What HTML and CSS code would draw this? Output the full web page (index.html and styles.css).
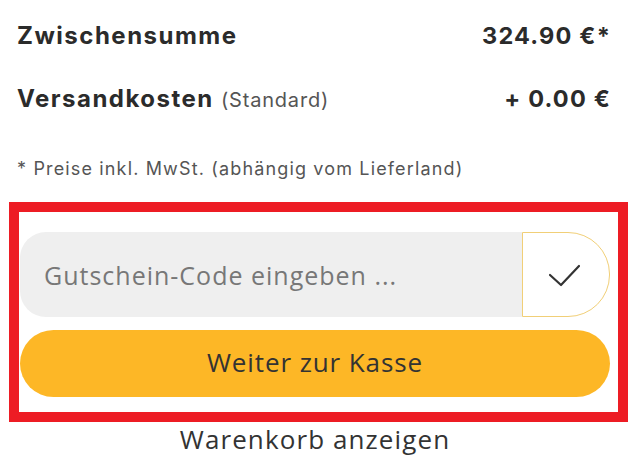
FILE: index.html
```html
<!DOCTYPE html>
<html lang="de">
<head>
<meta charset="utf-8">
<title>Warenkorb</title>
<link rel="stylesheet" href="styles.css">
</head>
<body>
<div class="page">
  <div class="totals">
    <div class="row">
      <span class="label">Zwischensumme</span>
      <span class="value">324.90 €*</span>
    </div>
    <div class="row">
      <span class="label">Versandkosten <span class="sub">(Standard)</span></span>
      <span class="value">+ 0.00 €</span>
    </div>
    <p class="note">* Preise inkl. MwSt. (abhängig vom Lieferland)</p>
  </div>
  <div class="highlight">
    <form class="voucher">
      <input class="voucher-input" type="text" placeholder="Gutschein-Code eingeben ...">
      <button class="voucher-submit" type="button" aria-label="Einlösen">
        <svg width="34" height="24" viewBox="0 0 34 24"><path d="M3 12 L14 22 L32 3" fill="none" stroke="#333" stroke-width="2.2" stroke-linecap="round" stroke-linejoin="round"/></svg>
      </button>
    </form>
    <button class="checkout" type="button">Weiter zur Kasse</button>
  </div>
  <a class="cart-link" href="#">Warenkorb anzeigen</a>
</div>
</body>
</html>
```
FILE: styles.css
```css
* { box-sizing: border-box; }
html, body { margin: 0; padding: 0; background: #fff; }
body { width: 630px; height: 473px; overflow: hidden; color: #333; font-family: "Inter", "DejaVu Sans", sans-serif; }
.page { display: flex; flex-direction: column; }
.totals { padding: 4px 20px 0 17px; }
.row { display: flex; justify-content: space-between; align-items: center; height: 63px; }
.label { font-size: 24px; font-weight: 700; color: #2b2b2b; letter-spacing: 1.5px; }
.sub { font-size: 20px; font-weight: 400; color: #555; letter-spacing: 0.8px; margin-left: 0; }
.value { font-size: 23.5px; font-weight: 700; color: #2b2b2b; letter-spacing: 1.2px; margin-right: -1px; }
.note { margin: 26px 0 0; font-size: 18px; line-height: 26px; color: #555; letter-spacing: 1.15px; }
.highlight { margin: 20px 0 0 9px; width: 619px; border: 10px solid #ed1c24; padding: 20px 8px 15px 1px; display: flex; flex-direction: column; gap: 13px; }
.voucher { display: flex; height: 85px; margin: 0; }
.voucher-input { flex: 1; border: 0; margin: 0; background: #efefef; border-radius: 26px 0 0 26px; padding: 0 0 0 24px; font-family: "Open Sans", "Lato", sans-serif; font-size: 25px; color: #333; outline: none; letter-spacing: 1px; }
.voucher-input::placeholder { color: #777; }
.voucher-submit { width: 88px; border: 1.5px solid #f1cf77; border-radius: 0 42px 42px 0; background: #fff; display: flex; align-items: center; justify-content: center; padding: 0 4px 0 0; margin: 0; }
.checkout { height: 67px; border: 0; border-radius: 34px; background: #fdb726; color: #333; font-family: "Open Sans", "Lato", sans-serif; font-size: 26px; padding: 0 0 3px; letter-spacing: 0.9px; }
.cart-link { margin-top: 2px; text-align: center; font-family: "Open Sans", "Lato", sans-serif; font-size: 26px; color: #333; text-decoration: none; line-height: 30px; letter-spacing: 1.1px; }
```
